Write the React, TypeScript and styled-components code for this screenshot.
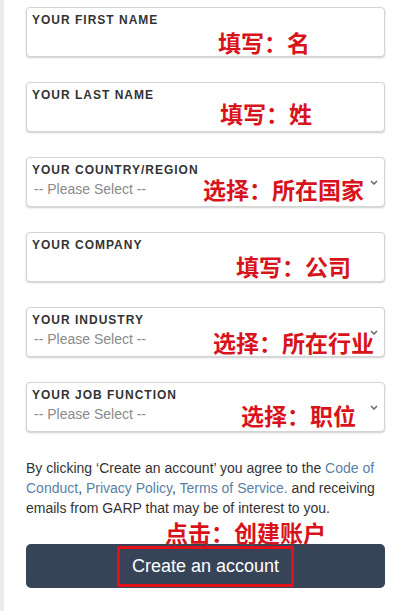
import styled, { createGlobalStyle } from 'styled-components';

const GlobalStyle = createGlobalStyle`
  html, body {
    margin: 0;
    padding: 0;
    background: #fff;
  }
  body {
    font-family: "Liberation Sans", Arial, sans-serif;
    color: #333;
  }
`;

const Page = styled.div`
  min-height: 100vh;
  box-sizing: border-box;
  border-left: 4px solid #ececec;
  padding: 7px 18px 0 22px;
`;

const Form = styled.form`
  display: flex;
  flex-direction: column;
  gap: 25px;
`;

const Field = styled.label`
  position: relative;
  display: flex;
  flex-direction: column;
  box-sizing: border-box;
  height: 50px;
  padding: 6px 8px 0 5px;
  border: 1px solid #d4d4d4;
  border-radius: 4px;
  background: #fff;
  box-shadow: 0 1px 2px rgba(0, 0, 0, 0.2);
`;

const FieldLabel = styled.span`
  font-size: 12px;
  line-height: 13px;
  font-weight: 700;
  letter-spacing: 1px;
  color: #333;
`;

const TextInput = styled.input`
  border: 0;
  outline: 0;
  padding: 0 2px;
  margin-top: 4px;
  height: 16px;
  font: 14px "Liberation Sans", Arial, sans-serif;
  background: transparent;
`;

const SelectValue = styled.div`
  margin-top: 4px;
  padding-left: 2px;
  font-size: 14px;
  line-height: 16px;
  color: #8a8a8a;
`;

const Chevron = styled.svg`
  position: absolute;
  right: 6px;
  top: 22px;
`;

const Note = styled.span<{ $left: number; $top: number }>`
  position: absolute;
  left: ${p => p.$left}px;
  top: ${p => p.$top}px;
  font-family: "Noto Sans CJK SC", sans-serif;
  font-size: 23px;
  line-height: 23px;
  font-weight: 700;
  color: #d8131b;
  white-space: nowrap;
  pointer-events: none;
`;

const Terms = styled.p`
  margin: 26px 0 0;
  font-size: 14px;
  line-height: 20px;
  color: #333;
`;

const Link = styled.a`
  color: #5a7fa6;
  text-decoration: none;
`;

const ButtonWrap = styled.div`
  position: relative;
  margin-top: 26px;
`;

const Button = styled.button`
  display: flex;
  align-items: center;
  justify-content: center;
  width: 100%;
  height: 44px;
  padding: 0;
  border: 0;
  border-radius: 5px;
  background: #374457;
  cursor: pointer;
`;

const ButtonText = styled.span`
  box-sizing: border-box;
  height: 41px;
  padding: 0 12px;
  border: 3px solid #e3101a;
  font: 18px/35px "Liberation Sans", Arial, sans-serif;
  color: #fff;
`;

type FieldDef = {
  label: string;
  select?: boolean;
  note: string;
  left: number;
  top: number;
};

const fields: FieldDef[] = [
  { label: 'YOUR FIRST NAME', note: '填写：名', left: 191, top: 23 },
  { label: 'YOUR LAST NAME', note: '填写：姓', left: 193, top: 19 },
  { label: 'YOUR COUNTRY/REGION', select: true, note: '选择：所在国家', left: 176, top: 20 },
  { label: 'YOUR COMPANY', note: '填写：公司', left: 209, top: 22 },
  { label: 'YOUR INDUSTRY', select: true, note: '选择：所在行业', left: 186, top: 23 },
  { label: 'YOUR JOB FUNCTION', select: true, note: '选择：职位', left: 214, top: 21 },
];

export default function App() {
  return (
    <Page>
      <GlobalStyle />
      <Form onSubmit={e => e.preventDefault()}>
        {fields.map(f => (
          <Field key={f.label}>
            <FieldLabel>{f.label}</FieldLabel>
            {f.select ? (
              <SelectValue>-- Please Select --</SelectValue>
            ) : (
              <TextInput type="text" />
            )}
            {f.select && (
              <Chevron width="8" height="5" viewBox="0 0 8 5">
                <path d="M1 1 L4 4 L7 1" fill="none" stroke="#666" strokeWidth="1.5" />
              </Chevron>
            )}
            <Note $left={f.left} $top={f.top}>{f.note}</Note>
          </Field>
        ))}
      </Form>
      <Terms>
        By clicking ‘Create an account’ you agree to the <Link href="#">Code of Conduct</Link>,{' '}
        <Link href="#">Privacy Policy</Link>, <Link href="#">Terms of Service.</Link> and receiving
        emails from GARP that may be of interest to you.
      </Terms>
      <ButtonWrap>
        <Note $left={139} $top={-23}>点击：创建账户</Note>
        <Button type="button">
          <ButtonText>Create an account</ButtonText>
        </Button>
      </ButtonWrap>
    </Page>
  );
}
